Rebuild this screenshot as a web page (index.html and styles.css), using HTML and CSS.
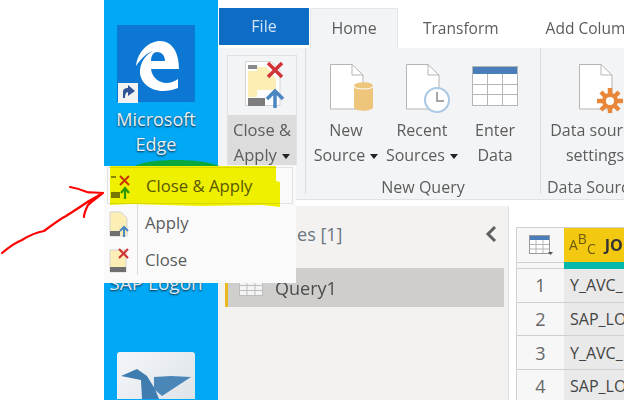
FILE: index.html
```html
<!DOCTYPE html>
<html lang="en">
  <head>
    <meta charset="UTF-8" />
    <title>Close &amp; Apply</title>
    <link rel="stylesheet" href="styles.css">
  </head>
  <body>
    <div class="page">
      <div class="gutter"></div>

      <aside class="desktop">
        <div class="shortcut">
          <div class="tile tile-edge">
            <svg width="78" height="78" viewBox="0 0 78 78">
              <path fill="#fff" fill-rule="evenodd" d="M19 41C21 25 33 16 43 16C55 16 62 27 62 44L34 44C35 53 43 58 49 58C54 58 58 56 61 54L61 63C56 65 51 66 46 66C33 66 22 57 23 45C24 35 30 29 36 26C29 28 23 35 19 41ZM34 36L48 36C48 30 44 27 40 27C36 27 34 31 34 36Z"/>
              <rect x="1" y="58" width="20" height="20" fill="#f2f2f2"/>
              <path fill="#2f5597" d="M6 73L6 67C6 64 8 63 11 63L11 60L18 66L11 71L11 67C9 67 8 69 8 73Z"/>
            </svg>
          </div>
          <div class="shortcut-name">Microsoft<br>Edge</div>
        </div>
        <div class="shortcut shortcut-sap">
          <div class="shortcut-name">SAP Logon</div>
        </div>
        <div class="tile tile-bird">
          <svg width="78" height="47" viewBox="0 0 78 47">
            <path fill="#3f7cb0" d="M4 24L20 17L30 24L38 37L42 47H25L24 28Z"/>
            <path fill="#4a86b8" d="M37 25L54 24L74 25L45 44L37 37Z"/>
          </svg>
        </div>
      </aside>

      <main class="app">
        <nav class="tabs">
          <div class="tab tab-file">File</div>
          <div class="tab tab-home">Home</div>
          <div class="tab tab-transform">Transform</div>
          <div class="tab tab-add">Add Column</div>
        </nav>

        <section class="ribbon">
          <div class="group group-close">
            <div class="close-btn">
              <div class="close-icon">
                <svg width="46" height="50" viewBox="0 0 46 50">
                  <path fill="#fff" stroke="#d4d4d4" d="M6.500 2.500H32L41 11V46.500H6.500Z"/>
                  <rect x="9" y="6" width="9" height="4" fill="#8a8a8a"/>
                  <rect x="9" y="12" width="9" height="26" fill="#fdeeb5"/>
                  <path fill="#fdeeb5" d="M18 8H28L37 20V31H18Z"/>
                  <rect x="9" y="39" width="17" height="8" fill="#7d7d7d"/>
                  <path stroke="#d13438" stroke-width="3.500" d="M29 4L43 18M43 4L29 18"/>
                  <path stroke="#4a86c0" stroke-width="3.500" fill="none" d="M36 49V33M28 40L36 32L44 40"/>
                </svg>
              </div>
              <div class="close-label">Close &amp;<br>Apply <span class="caret"></span></div>
            </div>
          </div>

          <div class="group group-query">
            <div class="group-items">
              <div class="cmd cmd-new">
                <svg class="cmd-icon" width="46" height="50" viewBox="0 0 46 50">
                  <path fill="#fff" stroke="#b5b5b5" d="M1.500 1.500H23L34 12V46H1.500Z"/>
                  <path fill="none" stroke="#b5b5b5" d="M23 1.500V12H34"/>
                  <path fill="#edc67c" d="M25 23C25 18 44 18 44 23V44C44 49 25 49 25 44Z"/>
                  <path fill="none" stroke="#fff" d="M25 23C25 27 44 27 44 23"/>
                </svg>
                <div class="cmd-label">New<br>Source <span class="caret"></span></div>
              </div>
              <div class="cmd cmd-recent">
                <svg class="cmd-icon" width="46" height="50" viewBox="0 0 46 50">
                  <path fill="#fff" stroke="#b5b5b5" d="M1.500 1.500H23L34 12V46H1.500Z"/>
                  <path fill="none" stroke="#b5b5b5" d="M23 1.500V12H34"/>
                  <circle cx="32" cy="37" r="12" fill="#fff" stroke="#a8c8e4" stroke-width="2"/>
                  <path fill="none" stroke="#8a8a8a" stroke-width="1.500" d="M32 29V38H39"/>
                </svg>
                <div class="cmd-label">Recent<br>Sources <span class="caret"></span></div>
              </div>
              <div class="cmd cmd-enter">
                <svg class="cmd-icon" width="46" height="50" viewBox="0 0 46 50">
                  <rect x="0.500" y="3.500" width="45" height="39" fill="#fff" stroke="#b5b5b5"/>
                  <rect x="1" y="4" width="44" height="7" fill="#4a7ebb"/>
                  <path fill="none" stroke="#b5b5b5" d="M15.500 11V42M30.500 11V42M1 21.500H45M1 31.500H45"/>
                </svg>
                <div class="cmd-label">Enter<br>Data</div>
              </div>
            </div>
            <div class="group-name">New Query</div>
          </div>

          <div class="group group-data">
            <div class="group-items">
              <div class="cmd cmd-settings">
                <svg class="cmd-icon" width="46" height="50" viewBox="0 0 46 50">
                  <path fill="#fff" stroke="#b5b5b5" d="M1.500 1.500H23L34 12V46H1.500Z"/>
                  <path fill="none" stroke="#b5b5b5" d="M23 1.500V12H34"/>
                  <path stroke="#e8873a" stroke-width="4.500" d="M32 25V51M19 38H45M23 29L41 47M41 29L23 47"/>
                  <circle cx="32" cy="38" r="8" fill="#e8873a"/>
                  <circle cx="32" cy="38" r="4" fill="#fff"/>
                </svg>
                <div class="cmd-label">Data source<br>settings</div>
              </div>
            </div>
            <div class="group-name group-name-data">Data Sources</div>
          </div>
        </section>

        <section class="workspace">
          <div class="queries">
            <div class="queries-head">
              <span>Queries [1]</span>
              <svg width="14" height="18" viewBox="0 0 14 18">
                <path fill="none" stroke="#5f5f5f" stroke-width="3" d="M11 2L4 9L11 16"/>
              </svg>
            </div>
            <div class="query-row">
              <svg width="24" height="16" viewBox="0 0 24 16">
                <rect x="0.500" y="0.500" width="23" height="15" fill="#f4f4f4" stroke="#bdbdbd"/>
                <path fill="none" stroke="#bdbdbd" d="M8 0V16M16 0V16M0 5.500H24M0 10.500H24"/>
              </svg>
              <span>Query1</span>
            </div>
          </div>

          <div class="preview">
            <div class="grid">
              <div class="corner">
                <svg width="24" height="22" viewBox="0 0 24 22">
                  <rect x="0.500" y="1.500" width="20" height="18" fill="#fff" stroke="#9a9a9a"/>
                  <rect x="1" y="2" width="19" height="4" fill="#4a7ebb"/>
                  <path fill="none" stroke="#b5b5b5" d="M7 6V19M14 6V19M1 10.500H20M1 15H20"/>
                  <path fill="#555" d="M19 18H24L21.500 21Z"/>
                </svg>
              </div>
              <div class="col-head">
                <span class="abc">A<sup>B</sup><sub>C</sub></span>
                <b>JOB</b>
              </div>
              <div class="corner-low"></div>
              <div class="col-bar"></div>
              <div class="row-num">1</div><div class="cell">Y_AVC_</div>
              <div class="row-num">2</div><div class="cell">SAP_LO</div>
              <div class="row-num">3</div><div class="cell">Y_AVC_</div>
              <div class="row-num">4</div><div class="cell">SAP_LO</div>
            </div>
          </div>
        </section>
      </main>

      <svg class="arc" width="84" height="7" viewBox="0 0 84 7">
        <path fill="#0aa83c" d="M0 7C14 -1 66 -1 84 7Z"/>
      </svg>

      <!-- dropdown sits over the desktop and the queries pane -->
      <div class="menu">
        <div class="menu-row menu-row-first">
          <svg class="menu-icon" width="24" height="26" viewBox="0 0 24 26">
            <rect x="2" y="3" width="5" height="2" fill="#8a8a8a"/>
            <rect x="2" y="19" width="9" height="6" fill="#7d7d7d"/>
            <path stroke="#d13438" stroke-width="2" d="M11 3L20 12M20 3L11 12"/>
            <path stroke="#2f9e44" stroke-width="2.200" fill="none" d="M16 26V16M12 20L16 15L20 20"/>
          </svg>
          <span>Close &amp; Apply</span>
        </div>
        <div class="menu-row">
          <svg class="menu-icon" width="24" height="28" viewBox="0 0 24 28">
            <path fill="#fdeeb5" stroke="#d4d4d4" d="M2 3H13L19 9V27H2Z"/>
            <rect x="2" y="22" width="10" height="5" fill="#6f6f6f"/>
            <path stroke="#4a86c0" stroke-width="2" fill="none" d="M16 28V19M12 22L16 18L20 22"/>
          </svg>
          <span>Apply</span>
        </div>
        <div class="menu-row">
          <svg class="menu-icon" width="24" height="26" viewBox="0 0 24 26">
            <path fill="#fdeeb5" stroke="#d4d4d4" d="M2 3H18V25H2Z"/>
            <rect x="2" y="20" width="16" height="5" fill="#6f6f6f"/>
            <path stroke="#d13438" stroke-width="2.200" d="M11 2L20 11M20 2L11 11"/>
          </svg>
          <span>Close</span>
        </div>
      </div>

      <!-- hand drawn marks on top of the screenshot -->
      <svg class="scribble" width="624" height="400" viewBox="0 0 624 400">
        <path fill="#f4f400" d="M110 166H276V181L280 182V207L262 205L200 206L130 204L110 205Z"/>
        <path fill="none" stroke="#f00" stroke-width="2.200" stroke-linecap="round" stroke-linejoin="round" d="M2 253C8 248 14 243 22 240C30 235 38 232 44 231C52 225 60 219 66 216C74 211 80 207 86 203C92 199 98 196 103 193C96 192 90 193 87 192C82 190 76 188 70 187M103 193C98 197 92 201 88 205C86 209 84 213 84 217"/>
      </svg>
    </div>
  </body>
</html>
```

FILE: styles.css
```css
html,
body {
  height: 100%;
  margin: 0;
}
body {
  background: #fff;
  font-family: "Open Sans", "Noto Sans", sans-serif;
  color: #5c5c5c;
}
.page {
  position: relative;
  display: flex;
  width: 624px;
  height: 400px;
  overflow: hidden;
  filter: blur(0.45px);
}
.gutter {
  flex: 0 0 104px;
}

/* desktop strip */
.desktop {
  flex: 0 0 114px;
  box-sizing: border-box;
  padding: 25px 10px 0 0;
  background: #00a8f5;
  display: flex;
  flex-direction: column;
  align-items: center;
}
.shortcut {
  width: 104px;
  text-align: center;
}
.tile {
  width: 78px;
  margin: 0 auto;
}
.tile-edge {
  height: 77px;
  background: #0d78d4;
}
.shortcut-name {
  margin-top: 5px;
  font-size: 18px;
  line-height: 25px;
  color: #e6f0f6;
  text-shadow: 0 1px 2px #123;
}
.shortcut-sap {
  margin-top: 114px;
}
.shortcut-sap .shortcut-name {
  margin-top: 0;
  font-size: 19px;
  white-space: nowrap;
  color: #dfeaf2;
}
.tile-bird {
  flex: none;
  height: 47px;
  margin-top: 56px;
  background: linear-gradient(135deg, #f4f7fa, #dfe4e8);
  border-radius: 3px 3px 0 0;
}

/* ribbon */
.app {
  flex: 1;
  min-width: 0;
  display: flex;
  flex-direction: column;
}
.tabs {
  display: flex;
  flex: none;
  height: 48px;
  box-sizing: border-box;
  padding-top: 8px;
  white-space: nowrap;
}
.tab {
  flex: none;
  font-size: 15.5px;
  line-height: 41px;
}
.tab-file {
  width: 90px;
  height: 37px;
  margin-left: 1px;
  line-height: 37px;
  font-size: 16px;
  text-align: center;
  color: #cfe3f5;
  background: #0f6cc4;
}
.tab-home {
  width: 88px;
  height: 40px;
  margin-left: 1px;
  box-sizing: border-box;
  border: 1px solid #e4e6e8;
  border-bottom: 0;
  text-align: center;
  line-height: 39px;
  font-size: 16px;
  background: #f3f4f6;
}
.tab-transform {
  margin-left: 25px;
}
.tab-add {
  margin-left: 47px;
}
.ribbon {
  display: flex;
  flex: none;
  height: 152px;
  box-sizing: border-box;
  background: #f3f4f6;
  border-bottom: 1px solid #e2e2e2;
  white-space: nowrap;
}
.group {
  flex: none;
  box-sizing: border-box;
  height: 146px;
  border-right: 1px solid #dcdcdc;
}
.group-close {
  width: 88px;
  padding: 7px 0 0 9px;
}
.close-btn {
  width: 70px;
  height: 110px;
  box-sizing: border-box;
  border: 1px solid #e0e0e0;
  text-align: center;
}
.close-icon {
  height: 60px;
  padding-top: 3px;
  box-sizing: border-box;
}
.close-label {
  height: 50px;
  box-sizing: border-box;
  padding-top: 2px;
  font-size: 16.5px;
  line-height: 25px;
  background: #dcdcdc;
  margin-top: -1px;
}
.caret {
  display: inline-block;
  vertical-align: middle;
  margin-left: 1px;
  border: 4px solid transparent;
  border-top: 5px solid #222;
  border-bottom: 0;
}
.group-query {
  width: 235px;
}
.group-data {
  border-right: 0;
  flex: 1;
  min-width: 0;
}
.group-items {
  display: flex;
  height: 124px;
}
.cmd {
  flex: none;
  box-sizing: border-box;
  padding-top: 15px;
  text-align: center;
}
.cmd-new {
  width: 76px;
  margin-left: 2px;
}
.cmd-recent {
  width: 76px;
}
.cmd-enter {
  width: 70px;
}
.cmd-settings {
  width: 100px;
  margin-left: 4px;
}
.cmd-icon {
  display: block;
  margin: 0 auto 5px;
}
.cmd-new .cmd-icon,
.cmd-recent .cmd-icon,
.cmd-settings .cmd-icon {
  transform: translateX(6px);
}
.cmd-label {
  font-size: 16px;
  line-height: 25px;
}
.group-name {
  height: 22px;
  margin-top: 4px;
  font-size: 16px;
  line-height: 22px;
  text-align: center;
  overflow: hidden;
}
.group-name-data {
  padding-left: 6px;
  text-align: left;
}

/* panes */
.workspace {
  flex: 1;
  display: flex;
  padding-top: 6px;
  min-height: 0;
}
.queries {
  flex: none;
  width: 291px;
  box-sizing: border-box;
  padding: 0 4px 0 7px;
  background: #f3f2f1;
  border-right: 1px solid #e0e0e0;
}
.queries-head {
  display: flex;
  justify-content: space-between;
  align-items: center;
  height: 55px;
  padding: 0 6px 0 25px;
  font-size: 18px;
  color: #6b7680;
}
.query-row {
  display: flex;
  align-items: center;
  gap: 12px;
  height: 39px;
  margin-top: 7px;
  padding-left: 11px;
  border-left: 3px solid #e8b923;
  background: #cfcecd;
  font-size: 18px;
  color: #4c4c4c;
}

/* data preview */
.preview {
  flex: 1;
  min-width: 0;
  padding: 21px 0 0 7px;
  overflow: hidden;
}
.grid {
  display: grid;
  grid-template-columns: 47px 60px;
  grid-template-rows: 34px 7px repeat(4, 33.7px);
  border-left: 1px solid #d0d0d0;
  border-top: 1px solid #d0d0d0;
}
.corner {
  display: flex;
  align-items: center;
  justify-content: center;
  background: #f7f7f7;
}
.corner-low {
  background: #f7f7f7;
  border-bottom: 1px solid #d0d0d0;
  border-top: 1px solid #d0d0d0;
  box-sizing: border-box;
}
.col-head {
  display: flex;
  align-items: center;
  gap: 9px;
  padding-left: 5px;
  background: #f2c811;
  color: #333;
  font-size: 16px;
  white-space: nowrap;
  overflow: hidden;
}
.abc {
  font-size: 14px;
  color: #6b5a10;
  line-height: 1;
}
.abc sup,
.abc sub {
  font-size: 14px;
  line-height: 0;
}
.col-bar {
  background: #01b8aa;
}
.row-num {
  display: flex;
  align-items: center;
  justify-content: center;
  background: #f7f7f7;
  border-bottom: 1px solid #d0d0d0;
  font-size: 18px;
  color: #666;
}
.cell {
  display: flex;
  align-items: center;
  padding-left: 6px;
  background: #e9e9e9;
  border-bottom: 1px solid #d0d0d0;
  font-size: 16px;
  color: #444;
  white-space: nowrap;
  overflow: hidden;
}

/* dropdown menu */
.arc {
  position: absolute;
  left: 135px;
  top: 159px;
}
.menu {
  position: absolute;
  left: 104px;
  top: 166px;
  width: 192px;
  height: 117px;
  box-sizing: border-box;
  padding: 1px 0 0 4px;
  background: #fafafa;
  z-index: 2;
}
.menu::before {
  content: "";
  position: absolute;
  left: 33px;
  top: 39px;
  bottom: 8px;
  border-left: 1px solid #dcdcdc;
}
.menu-row {
  display: flex;
  align-items: center;
  height: 37px;
  font-size: 16.7px;
}
.menu-row-first {
  margin: 0 3px 0 -1px;
  padding-left: 1px;
  border: 1px solid #e2e2e2;
  box-sizing: border-box;
}
.menu-icon {
  flex: none;
  margin-right: 13px;
}
.scribble {
  position: absolute;
  left: 0;
  top: 0;
  z-index: 3;
  mix-blend-mode: multiply;
  pointer-events: none;
}
```
